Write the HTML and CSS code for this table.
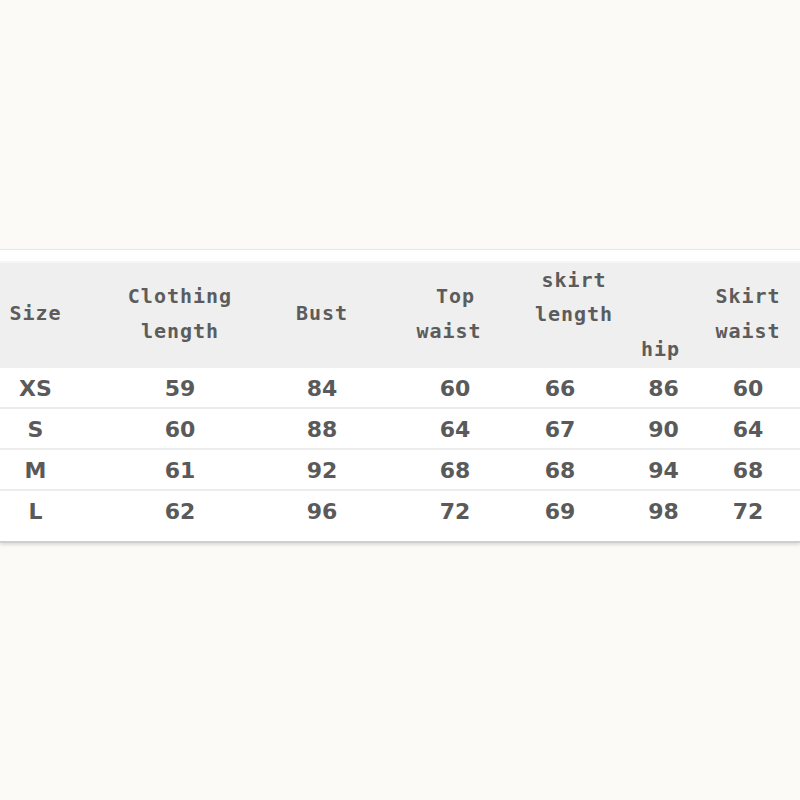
FILE: index.html
```html
<!DOCTYPE html>
<html>
<head>
<meta charset="utf-8">
<link rel="stylesheet" href="styles.css">
</head>
<body>
<div class="sheet">
  <table class="sizes">
    <colgroup>
      <col class="c1"><col class="c2"><col class="c3"><col class="c4"><col class="c5"><col class="c6"><col class="c7">
    </colgroup>
    <thead>
      <tr>
        <th class="k1">Size</th>
        <th class="k2">Clothing<br>length</th>
        <th class="k3">Bust</th>
        <th class="k4">&nbsp;Top<br>waist</th>
        <th class="k5 top">skirt<br>length</th>
        <th class="k6 bottom">hip</th>
        <th class="k7">Skirt<br>waist</th>
      </tr>
    </thead>
    <tbody>
      <tr><td class="k1">XS</td><td class="k2">59</td><td class="k3">84</td><td class="k4">60</td><td class="k5">66</td><td class="k6">86</td><td class="k7">60</td></tr>
      <tr><td class="k1">S</td><td class="k2">60</td><td class="k3">88</td><td class="k4">64</td><td class="k5">67</td><td class="k6">90</td><td class="k7">64</td></tr>
      <tr><td class="k1">M</td><td class="k2">61</td><td class="k3">92</td><td class="k4">68</td><td class="k5">68</td><td class="k6">94</td><td class="k7">68</td></tr>
      <tr class="last"><td class="k1">L</td><td class="k2">62</td><td class="k3">96</td><td class="k4">72</td><td class="k5">69</td><td class="k6">98</td><td class="k7">72</td></tr>
    </tbody>
  </table>
</div>
</body>
</html>
```

FILE: styles.css
```css
html, body {
  margin: 0;
  padding: 0;
  background: #fbfaf6;
  height: 800px;
  overflow: hidden;
}

.sheet {
  margin-top: 249px;
  background: #ffffff;
  border-top: 1px solid #e8e8e6;
  padding-top: 11px;
  padding-bottom: 11px;
  border-bottom: 2px solid #cfcfcf;
  box-shadow: 0 2px 3px rgba(0, 0, 0, 0.12);
}

.sizes {
  width: 800px;
  border-collapse: collapse;
  table-layout: fixed;
  color: #5a5a5a;
}

.c1 { width: 107px; }
.c2 { width: 144px; }
.c3 { width: 136px; }
.c4 { width: 126px; }
.c5 { width: 104px; }
.c6 { width: 87px; }
.c7 { width: 96px; }

.sizes thead tr {
  background: #efefef;
  border-top: 2px solid #f6f6f6;
}

.sizes th {
  height: 101px;
  padding-top: 0;
  padding-bottom: 4px;
  font-family: "DejaVu Sans Mono", monospace;
  font-weight: bold;
  font-size: 20px;
  letter-spacing: 1px;
  line-height: 35px;
  text-align: center;
  vertical-align: middle;
  white-space: nowrap;
  color: #5c5c5c;
}

.sizes th.top { vertical-align: top; line-height: 34px; }
.sizes th.bottom { vertical-align: bottom; padding-bottom: 1px; }

.sizes td {
  height: 37px;
  padding-top: 2px;
  padding-bottom: 0;
  font-family: "DejaVu Sans", Verdana, sans-serif;
  font-weight: bold;
  font-size: 22px;
  line-height: 37px;
  text-align: center;
  vertical-align: middle;
}

.sizes tbody tr {
  border-bottom: 2px solid #ececec;
}

.sizes tbody tr.last {
  border-bottom: none;
}

th.k1 { padding-left: 0; padding-right: 36px; }
th.k2 { padding-left: 2px; padding-right: 0; }
th.k3 { padding-left: 6px; padding-right: 0; }
th.k4 { padding-left: 0; padding-right: 2px; }
th.k5 { padding-left: 18px; padding-right: 0; }
th.k6 { padding-left: 0; padding-right: 0; }
th.k7 { padding-left: 0; padding-right: 8px; }

td.k1 { padding-left: 0; padding-right: 36px; }
td.k2 { padding-left: 2px; padding-right: 0; }
td.k3 { padding-left: 6px; padding-right: 0; }
td.k4 { padding-left: 10px; padding-right: 0; }
td.k5 { padding-left: 0; padding-right: 10px; }
td.k6 { padding-left: 6px; padding-right: 0; }
td.k7 { padding-left: 0; padding-right: 8px; }
```
